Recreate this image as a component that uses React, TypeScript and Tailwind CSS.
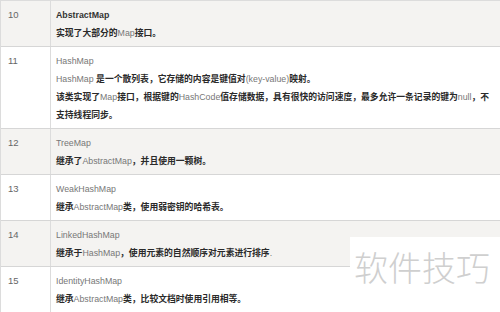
const L = ({ children }: { children: React.ReactNode }) => (
  <span className="font-normal text-[#777]">{children}</span>
);

interface Row {
  no: string;
  title: string;
  boldTitle?: boolean;
  lines: React.ReactNode[];
  shaded: boolean;
}

const rows: Row[] = [
  {
    no: '10',
    title: 'AbstractMap',
    boldTitle: true,
    shaded: true,
    lines: [<>实现了大部分的<L>Map</L>接口。</>],
  },
  {
    no: '11',
    title: 'HashMap',
    shaded: false,
    lines: [
      <><L>HashMap </L>是一个散列表，它存储的内容是键值对<L>(key-value)</L>映射。</>,
      <>该类实现了<L>Map</L>接口，根据键的<L>HashCode</L>值存储数据，具有很快的访问速度，最多允许一条记录的键为<L>null</L>，不</>,
      <>支持线程同步。</>,
    ],
  },
  {
    no: '12',
    title: 'TreeMap',
    shaded: true,
    lines: [<>继承了<L>AbstractMap</L>，并且使用一颗树。</>],
  },
  {
    no: '13',
    title: 'WeakHashMap',
    shaded: false,
    lines: [<>继承<L>AbstractMap</L>类，使用弱密钥的哈希表。</>],
  },
  {
    no: '14',
    title: 'LinkedHashMap',
    shaded: true,
    lines: [<>继承于<L>HashMap</L>，使用元素的自然顺序对元素进行排序<L>.</L></>],
  },
  {
    no: '15',
    title: 'IdentityHashMap',
    shaded: false,
    lines: [<>继承<L>AbstractMap</L>类，比较文档时使用引用相等。</>],
  },
];

export default function App() {
  return (
    <div className="relative w-[500px] h-[312px] overflow-hidden bg-white font-[Liberation_Sans,Noto_Sans_CJK_SC,sans-serif] text-[8.8px] leading-[18px]">
      <div className="flex flex-col border-t border-l border-[#dcdcdc]">
        {rows.map((r) => (
          <div
            key={r.no}
            className={`flex border-b border-[#d6d6d6] ${r.shaded ? 'bg-[#f4f3f1]' : 'bg-white'}`}
          >
            <div className="w-[50px] shrink-0 border-r border-[#dcdcdc] pl-[7px] pt-[5px] pb-[4px] text-[9.5px] text-[#666]">
              {r.no}
            </div>
            <div className="flex flex-col pl-[5px] pt-[5px] pb-[4px] whitespace-nowrap">
              <div className={r.boldTitle ? 'font-bold text-[#333]' : 'text-[#777]'}>{r.title}</div>
              {r.lines.map((ln, i) => (
                <div key={i} className="font-bold text-[#2a2a2a]">
                  {ln}
                </div>
              ))}
            </div>
          </div>
        ))}
      </div>
      <div className="absolute left-[350px] top-[237px] w-[150px] h-[80px] bg-white flex items-start pl-[4px] pt-[10px]">
        <span className="font-['Noto_Sans_CJK_SC',sans-serif] font-light text-[34px] leading-[40px] text-[#cfcfcf]">
          软件技巧
        </span>
      </div>
    </div>
  );
}
